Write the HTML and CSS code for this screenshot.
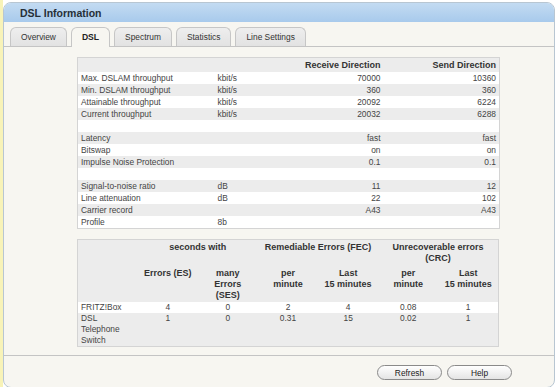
FILE: index.html
```html
<!DOCTYPE html>
<html lang="en">
<head>
  <meta charset="UTF-8">
  <title>DSL Information</title>
  <link rel="stylesheet" href="styles.css">
</head>
<body>
  <div class="window">
    <div class="titlebar">DSL Information</div>

    <div class="tabbar">
      <div class="tab">Overview</div>
      <div class="tab active">DSL</div>
      <div class="tab">Spectrum</div>
      <div class="tab">Statistics</div>
      <div class="tab">Line Settings</div>
    </div>

    <div class="content">
      <table class="info">
        <colgroup>
          <col class="c-label"><col class="c-unit"><col class="c-recv"><col class="c-send">
        </colgroup>
        <tr class="head">
          <th></th><th></th><th class="num">Receive Direction</th><th class="num">Send Direction</th>
        </tr>
        <tr><td>Max. DSLAM throughput</td><td>kbit/s</td><td class="num">70000</td><td class="num">10360</td></tr>
        <tr><td>Min. DSLAM throughput</td><td>kbit/s</td><td class="num">360</td><td class="num">360</td></tr>
        <tr><td>Attainable throughput</td><td>kbit/s</td><td class="num">20092</td><td class="num">6224</td></tr>
        <tr><td>Current throughput</td><td>kbit/s</td><td class="num">20032</td><td class="num">6288</td></tr>
        <tr><td></td><td></td><td></td><td></td></tr>
        <tr><td>Latency</td><td></td><td class="num">fast</td><td class="num">fast</td></tr>
        <tr><td>Bitswap</td><td></td><td class="num">on</td><td class="num">on</td></tr>
        <tr><td>Impulse Noise Protection</td><td></td><td class="num">0.1</td><td class="num">0.1</td></tr>
        <tr><td></td><td></td><td></td><td></td></tr>
        <tr><td>Signal-to-noise ratio</td><td>dB</td><td class="num">11</td><td class="num">12</td></tr>
        <tr><td>Line attenuation</td><td>dB</td><td class="num">22</td><td class="num">102</td></tr>
        <tr><td>Carrier record</td><td></td><td class="num">A43</td><td class="num">A43</td></tr>
        <tr><td>Profile</td><td>8b</td><td></td><td></td></tr>
      </table>

      <table class="errors">
        <colgroup>
          <col><col><col><col><col><col><col>
        </colgroup>
        <tr class="head">
          <th></th>
          <th colspan="2">seconds with</th>
          <th colspan="2">Remediable Errors (FEC)</th>
          <th colspan="2">Unrecoverable errors<br>(CRC)</th>
        </tr>
        <tr class="head">
          <th></th>
          <th>Errors (ES)</th>
          <th>many<br>Errors<br>(SES)</th>
          <th>per<br>minute</th>
          <th>Last<br>15 minutes</th>
          <th>per<br>minute</th>
          <th>Last<br>15 minutes</th>
        </tr>
        <tr class="light">
          <td>FRITZ!Box</td><td>4</td><td>0</td><td>2</td><td>4</td><td>0.08</td><td>1</td>
        </tr>
        <tr class="shade">
          <td>DSL Telephone Switch</td><td>1</td><td>0</td><td>0.31</td><td>15</td><td>0.02</td><td>1</td>
        </tr>
      </table>
    </div>

    <div class="footer">
      <button class="btn">Refresh</button>
      <button class="btn">Help</button>
    </div>
  </div>
</body>
</html>
```

FILE: styles.css
```css
body {
  margin: 0;
  padding: 2px 0 0 3px;
  background: linear-gradient(to right, #f8f3b8 3px, #ffffff 3px);
  font-family: "Liberation Sans", Arial, sans-serif;
  color: #333;
}

.window {
  width: 550px;
  border: 1px solid #b8c6d2;
  border-radius: 8px;
  overflow: hidden;
  background: #f7f6f1;
}

.titlebar {
  height: 19px;
  line-height: 20px;
  padding-left: 16px;
  background: linear-gradient(#c3dbf2, #a8caec);
  font-size: 10.5px;
  font-weight: bold;
  color: #262f38;
}

.tabbar {
  display: flex;
  gap: 4px;
  padding: 5px 6px 0;
  border-bottom: 1px solid #c4c4c4;
}

.tab {
  height: 18px;
  line-height: 19px;
  padding: 0 10px;
  border: 1px solid #c6c6c6;
  border-bottom: none;
  border-radius: 6px 6px 0 0;
  background: linear-gradient(#eeeeee, #e2e2e2);
  font-size: 8.4px;
  color: #333;
}

.tab.active {
  height: 19px;
  margin-bottom: -1px;
  background: #f7f6f1;
  font-weight: bold;
  font-size: 8.6px;
  color: #222;
}

.content {
  display: flex;
  flex-direction: column;
  gap: 10px;
  padding: 10px 0 8px 73px;
}

table {
  width: 422px;
  border-collapse: collapse;
  table-layout: fixed;
  border: 1px solid #d4d4d4;
  background: #fff;
}

td {
  font-size: 8.4px;
  color: #444;
  padding: 0 3px;
  white-space: nowrap;
}

th {
  font-size: 9px;
  font-weight: bold;
  color: #333;
}

.num { text-align: right; }

/* main info table */
.c-label { width: 137px; }
.c-unit { width: 86px; }
.c-recv { width: 83px; }
.c-send { width: 116px; }

.info tr { height: 12px; }
.info td { line-height: 12px; }
.info tr:nth-child(odd) { background: #ececec; }
.info tr.head { height: 14px; background: #ececec; }
.info th { padding: 0 3px; line-height: 14px; }

/* error counter table */
.errors tr.head { background: #ececec; }
.errors th {
  padding: 2px 4px 1px;
  line-height: 11.3px;
  text-align: center;
  vertical-align: top;
}
.errors td {
  padding: 0 4px;
  line-height: 11px;
  text-align: center;
  vertical-align: top;
  white-space: normal;
}
.errors td:first-child {
  text-align: left;
  padding-left: 3px;
}
.errors tr.light { background: #fff; }
.errors tr.shade { background: #ececec; }

.footer {
  display: flex;
  justify-content: flex-end;
  gap: 5px;
  padding: 9px 42px 7px 0;
  border-top: 1px solid #c4c4c4;
}

.btn {
  width: 65px;
  height: 15px;
  padding: 0;
  border: 1px solid #8a8a8a;
  border-radius: 8px;
  background: linear-gradient(#ffffff, #e4e4e4);
  font-family: "Liberation Sans", Arial, sans-serif;
  font-size: 8.4px;
  color: #222;
}
```
